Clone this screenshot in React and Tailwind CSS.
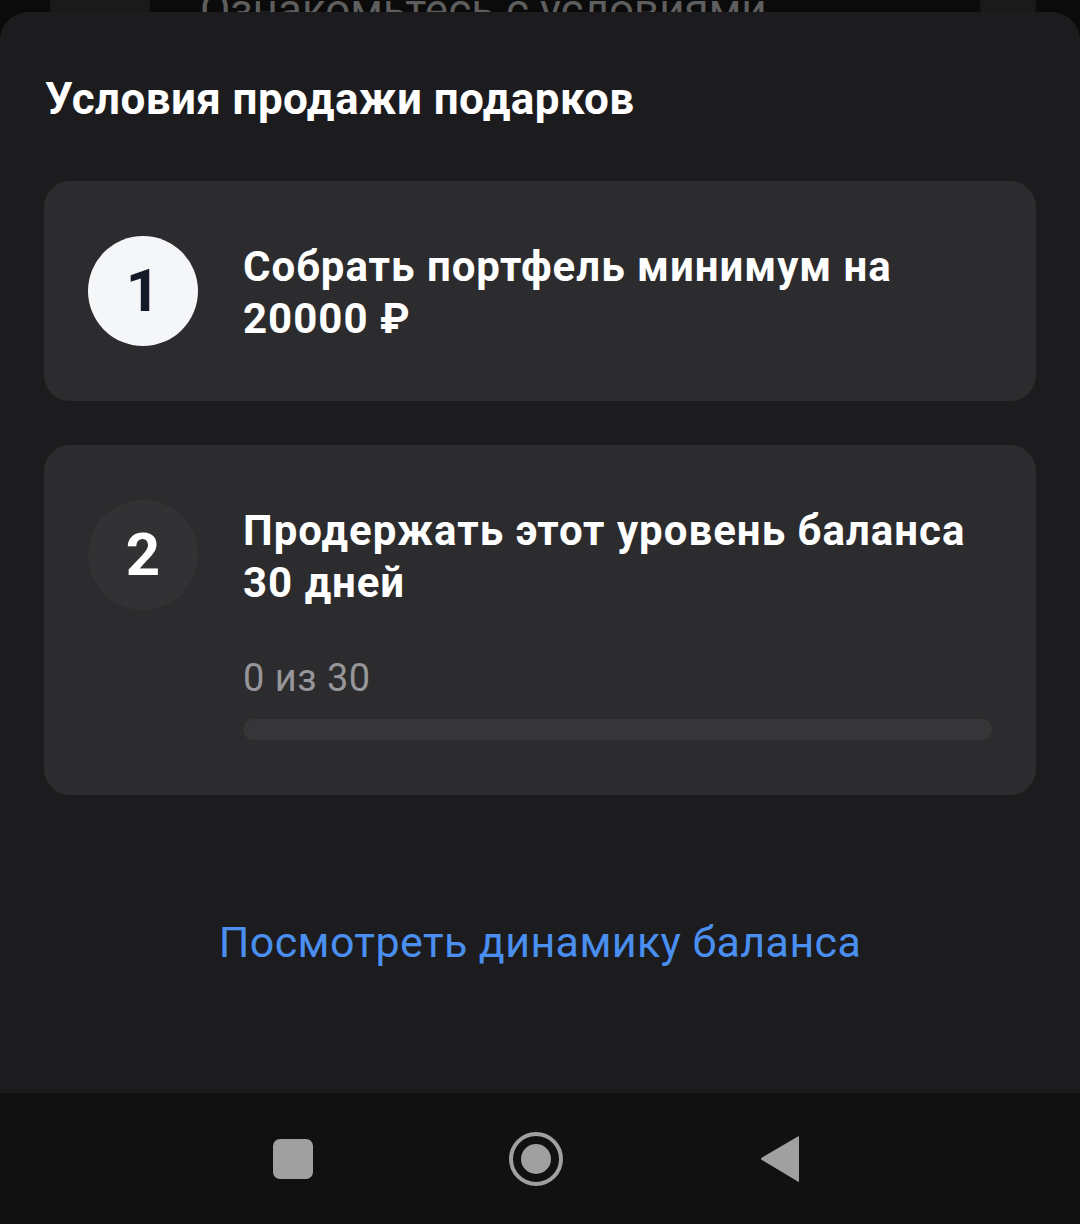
import { useState } from "react";

const font = { fontFamily: "Roboto, 'Noto Sans', sans-serif" };

const StepCard = ({ num, done, children, extra }) => (
  <div className="rounded-[26px] bg-[#2c2c2e] px-[44px] pt-[55px] pb-[55px]">
    <div className="flex items-start gap-[45px]">
      <div
        className={
          "w-[110px] h-[110px] shrink-0 rounded-full flex items-center justify-center text-[60px] font-bold " +
          (done ? "bg-[#f5f6f8] text-[#141a2a]" : "bg-[#323234] text-white")
        }
      >
        {num}
      </div>
      <div className="flex-1 pt-[5px]">
        <p className="text-[42px] leading-[52px] font-bold text-white tracking-[1px]">{children}</p>
        {extra}
      </div>
    </div>
  </div>
);

export default function App() {
  const [days] = useState(0);

  return (
    <div className="w-[1080px] h-[1224px] bg-[#0b0b0b] flex flex-col overflow-hidden relative" style={font}>
      {/* header behind the sheet */}
      <div className="absolute top-[-40px] left-0 right-0 h-[60px] flex items-center px-[50px]">
        <div className="w-[100px] h-[100px] rounded-full bg-[#1a1a1a] flex items-center justify-center mt-[30px]">
          <div className="w-[42px] h-[10px] rounded-full bg-[#5a5a5a] mb-[40px]" />
        </div>
        <span className="ml-[50px] text-[44px] text-[#5e5e5e] mt-[40px]">Ознакомьтесь с условиями</span>
        <div className="ml-auto w-[56px] h-[56px] rounded-full bg-[#1a1a1a] mt-[30px] mr-[-6px]" />
      </div>

      <div className="mt-[12px] flex-1 rounded-t-[28px] bg-[#1c1c1e] relative px-[44px] pt-[63px]">
        <h1 className="text-[44px] leading-[48px] font-bold text-white ml-[1px] tracking-[0.4px]">
          Условия продажи подарков
        </h1>

        <div className="mt-[58px] flex flex-col gap-[44px]">
          <StepCard num="1" done>
            Собрать портфель минимум на 20000 ₽
          </StepCard>
          <StepCard
            num="2"
            extra={
              <div className="mt-[47px]">
                <div className="text-[38px] leading-[44px] text-[#96969b] tracking-[0.5px]">{days} из 30</div>
                <div className="mt-[19px] h-[21px] rounded-full bg-[#363638] overflow-hidden">
                  <div className="h-full bg-[#4a8ff0]" style={{ width: `${(days / 30) * 100}%` }} />
                </div>
              </div>
            }
          >
            Продержать этот уровень баланса 30 дней
          </StepCard>
        </div>

        <div className="mt-[122px] text-center">
          <button className="text-[43px] leading-[50px] text-[#4a8ff0] tracking-[0.4px]">Посмотреть динамику баланса</button>
        </div>
      </div>

      {/* android nav bar */}
      <div className="h-[131px] bg-[#111111] flex items-center justify-center gap-[195px] pr-[6px] shrink-0">
        <div className="w-[40px] h-[40px] rounded-[7px] bg-[#a0a0a0]" />
        <svg width="56" height="56" viewBox="0 0 56 56">
          <circle cx="28" cy="28" r="25" fill="none" stroke="#a0a0a0" strokeWidth="4" />
          <circle cx="28" cy="28" r="15" fill="#a0a0a0" />
        </svg>
        <svg width="42" height="48" viewBox="0 0 42 48">
          <path d="M40 2 L40 46 Q40 48 38 46 L3 25 Q1 24 3 22.5 L38 2 Q40 0.5 40 2 Z" fill="#a0a0a0" />
        </svg>
      </div>
    </div>
  );
}
